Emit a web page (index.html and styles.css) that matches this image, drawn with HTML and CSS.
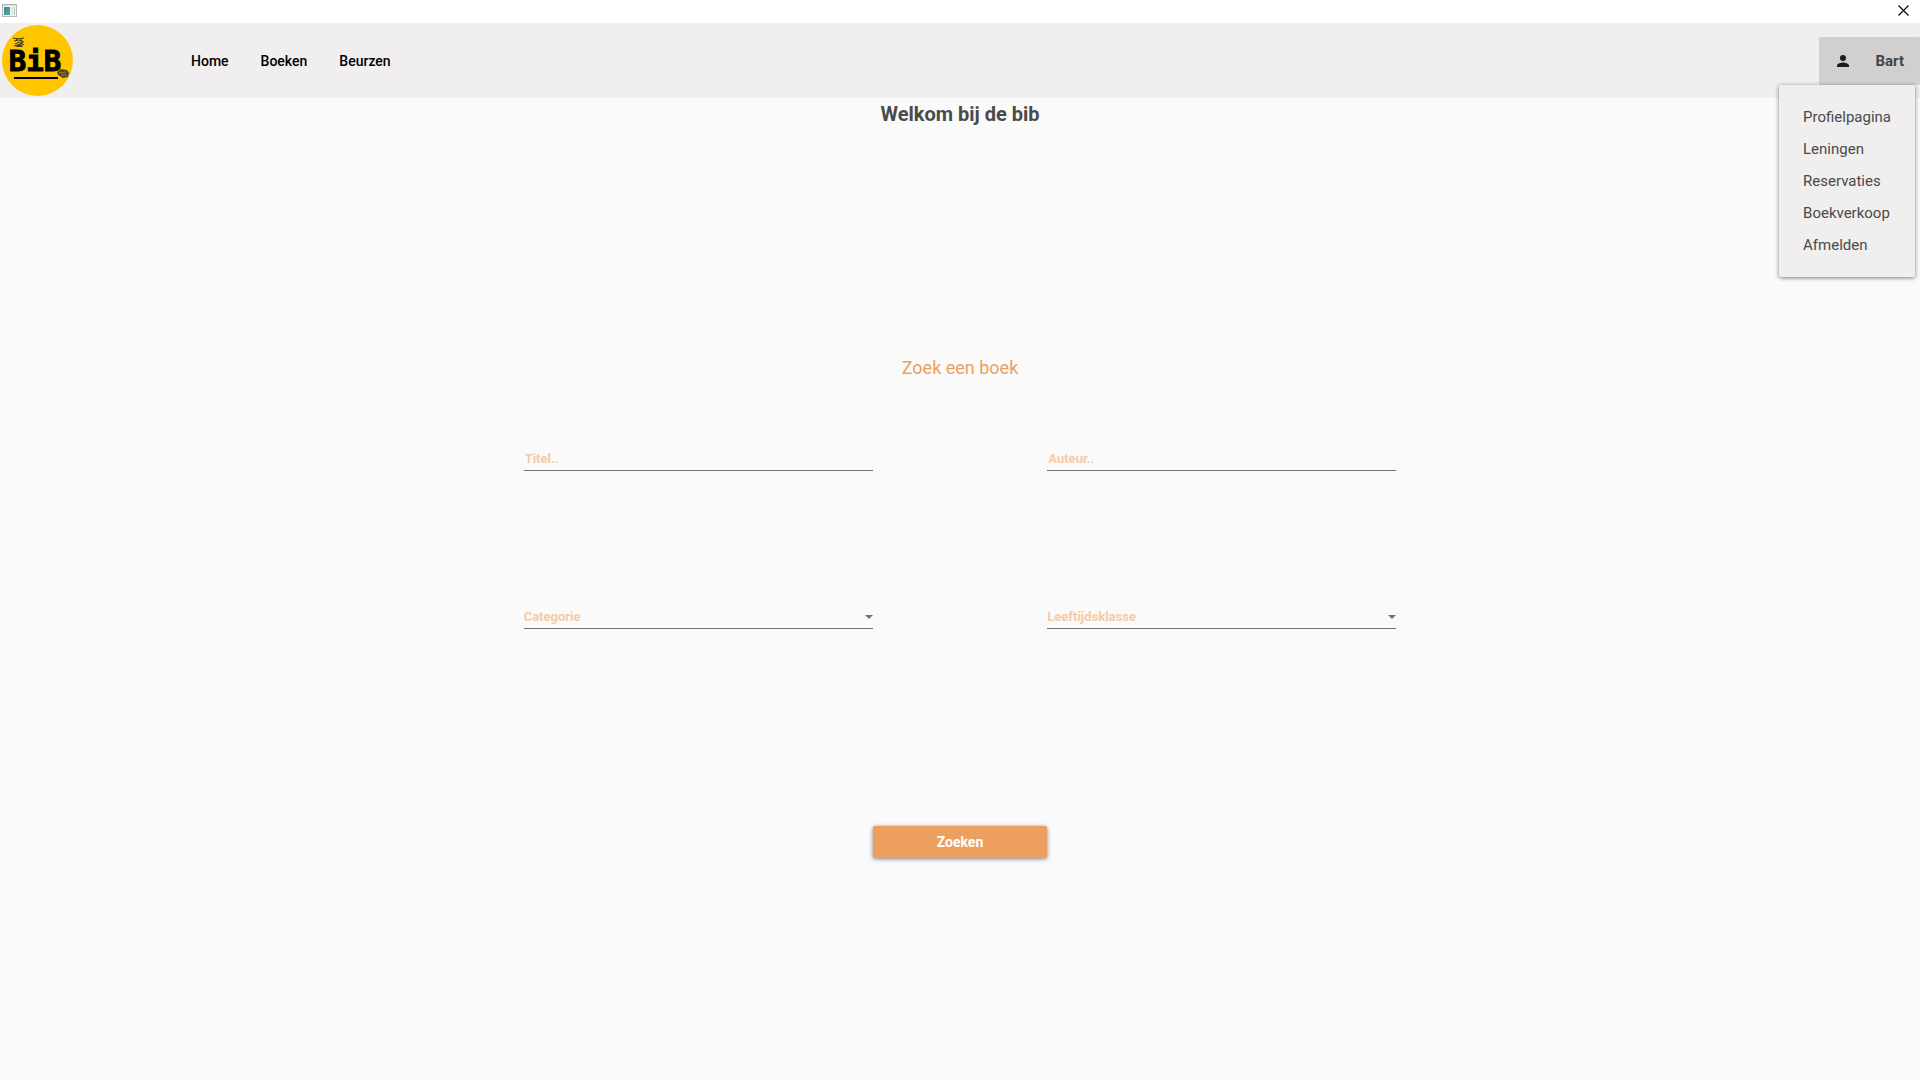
FILE: index.html
```html
<!DOCTYPE html>
<html lang="nl">
<head>
<meta charset="utf-8">
<title>Bib</title>
<link rel="stylesheet" href="styles.css">
</head>
<body>
<div class="titlebar">
  <svg class="app-icon" viewBox="0 0 15 14" aria-hidden="true">
    <defs><linearGradient id="pane" x1="0" y1="0" x2="1" y2="1"><stop offset="0" stop-color="#3f78b5"/><stop offset="1" stop-color="#56b877"/></linearGradient></defs>
    <rect x="0.5" y="0.5" width="14" height="12" fill="#f5f5f5" stroke="#b4b8bc"/>
    <rect x="1" y="1" width="13" height="1" fill="#d5d9dc"/>
    <rect x="2" y="3" width="6" height="8" fill="url(#pane)"/>
    <rect x="9" y="3" width="2" height="8" fill="#e2e5e7"/>
    <rect x="12" y="3" width="1" height="8" fill="#a9c9bd"/>
  </svg>
  <button class="close" type="button" aria-label="Sluiten">
    <svg viewBox="0 0 11 11" aria-hidden="true"><path d="M.5.5l10 10M10.500.5l-10 10" fill="none" stroke="#000" stroke-width="1.1"/></svg>
  </button>
</div>
<header class="header">
  <svg class="logo" viewBox="0 0 71 71" role="img" aria-label="BiB">
    <circle cx="35.500" cy="35.500" r="35.500" fill="#ffc600"/>
    <g fill="none" stroke="#3d3820" stroke-width="1">
      <path d="M11 13l4 1 7-1M12 16l5-1 5 2M13 19l4-2 5 3M12 21l9-3M15 13l-1 3M19 14l1 4"/>
    </g>
    <path d="M15 20l4-1 2 3h-7z" fill="#4a4329"/>
    <text class="logo-text" x="33" y="46" text-anchor="middle">BiB</text>
    <path d="M12 53H56" stroke="#000" stroke-width="2"/>
    <path d="M55 47l4-3 6 1 2 3-1 4-5 1-5-3z" fill="#4b452f"/>
    <path d="M57 48l7-1M59 50l6 0" stroke="#b58f17" stroke-width=".8"/>
  </svg>
  <nav class="nav">
    <a href="#home">Home</a>
    <a href="#boeken">Boeken</a>
    <a href="#beurzen">Beurzen</a>
  </nav>
  <div class="account">
    <button class="account-button" type="button" aria-expanded="true" aria-controls="account-menu">
      <svg viewBox="4 4 16 16" aria-hidden="true"><path fill="#1c1c1c" d="M12 12a4 4 0 1 0 0-8 4 4 0 0 0 0 8zm0 2c-2.670 0-8 1.340-8 4v2h16v-2c0-2.660-5.330-4-8-4z"/></svg>
      <span>Bart</span>
    </button>
    <div class="menu" id="account-menu">
      <a href="#profiel">Profielpagina</a>
      <a href="#leningen">Leningen</a>
      <a href="#reservaties">Reservaties</a>
      <a href="#boekverkoop">Boekverkoop</a>
      <a href="#afmelden">Afmelden</a>
    </div>
  </div>
</header>
<main>
  <h1>Welkom bij de bib</h1>
  <form class="search">
    <h2>Zoek een boek</h2>
    <div class="field left"><input class="control" type="text" placeholder="Titel.." aria-label="Titel"></div>
    <div class="field right"><input class="control" type="text" placeholder="Auteur.." aria-label="Auteur"></div>
    <div class="field left select">
      <select class="control" aria-label="Categorie"><option>Categorie</option></select>
      <svg class="arrow" viewBox="0 0 8 4" aria-hidden="true"><path d="M0 0h8L4 4z" fill="#707070"/></svg>
    </div>
    <div class="field right select">
      <select class="control" aria-label="Leeftijdsklasse"><option>Leeftijdsklasse</option></select>
      <svg class="arrow" viewBox="0 0 8 4" aria-hidden="true"><path d="M0 0h8L4 4z" fill="#707070"/></svg>
    </div>
    <button class="submit" type="submit">Zoeken</button>
  </form>
</main>
</body>
</html>
```
FILE: styles.css
```css
* {
  box-sizing: border-box;
}

body {
  margin: 0;
  min-height: 100vh;
  background: #fafafa;
  color: #4a4a4a;
  font-family: Roboto, sans-serif;
  font-size: 15px;
}

button,
input,
select {
  font: inherit;
}

a {
  color: inherit;
  text-decoration: none;
}

.titlebar {
  display: flex;
  justify-content: space-between;
  align-items: center;
  height: 23px;
  padding: 0 11px 2px 2px;
  background: #fff;
}

.app-icon {
  width: 15px;
  height: 14px;
}

.close {
  display: flex;
  padding: 0;
  border: 0;
  background: none;
}

.close svg {
  width: 11px;
  height: 11px;
}

.header {
  display: flex;
  align-items: center;
  height: 75px;
  padding-left: 2px;
  background: #f0eeee;
}

.logo {
  width: 71px;
  height: 71px;
}

.logo-text {
  fill: #000;
  stroke: #000;
  stroke-width: 1px;
  font-family: "DejaVu Sans Mono", monospace;
  font-size: 29px;
  font-weight: 700;
}

.nav {
  display: flex;
  gap: 32px;
  margin-left: 118px;
  color: #000;
  font-size: 14px;
  font-weight: 500;
}

.account {
  position: relative;
  margin-left: auto;
}

.account-button {
  display: flex;
  align-items: center;
  gap: 26px;
  height: 48px;
  padding: 0 16px 0 18px;
  border: 0;
  border-radius: 2px;
  background: #d1cfcf;
  color: #444;
  font-weight: 700;
}

.account-button svg {
  width: 12px;
  height: 12px;
}

.menu {
  position: absolute;
  top: 100%;
  right: 5px;
  padding: 16px 24px;
  border-radius: 2px;
  background: #f0eeee;
  box-shadow: 0 1px 4px rgba(0, 0, 0, 0.5);
}

.menu a {
  display: block;
  line-height: 32px;
}

h1,
h2 {
  margin: 0;
  text-align: center;
  line-height: 32px;
}

h1 {
  font-size: 20px;
  font-weight: 700;
}

.search {
  display: grid;
  grid-template-columns: 3fr 2fr 1fr 2fr 3fr;
  padding-top: 222px;
  color: #ed9f5f;
}

h2 {
  grid-column: 1 / -1;
  margin-bottom: 60px;
  font-size: 18px;
  font-weight: 400;
}

.field {
  position: relative;
  margin-bottom: 130px;
}

.field.select {
  margin-bottom: 197px;
}

.left {
  grid-column: 2;
}

.right {
  grid-column: 4;
}

.control {
  display: block;
  width: 100%;
  height: 27px;
  padding: 0;
  border: 0;
  border-bottom: 1px solid #707070;
  border-radius: 0;
  outline: 0;
  background: transparent;
  color: #f6caa4;
  font-size: 13px;
  font-weight: 700;
  appearance: none;
}

.select .control {
  height: 28px;
  padding-top: 3px;
}

input.control {
  padding: 3px 1px 0;
}

.control::placeholder {
  color: #f6caa4;
  opacity: 1;
}

.arrow {
  position: absolute;
  top: 14px;
  right: 0;
  width: 8px;
  height: 4px;
  pointer-events: none;
}

.submit {
  grid-column: 3;
  height: 32px;
  padding: 0;
  border: 0;
  border-radius: 2px;
  background: #ed9f5f;
  box-shadow: 0 1px 4px rgba(0, 0, 0, 0.5);
  color: #fff;
  font-size: 14px;
  font-weight: 700;
}
```
